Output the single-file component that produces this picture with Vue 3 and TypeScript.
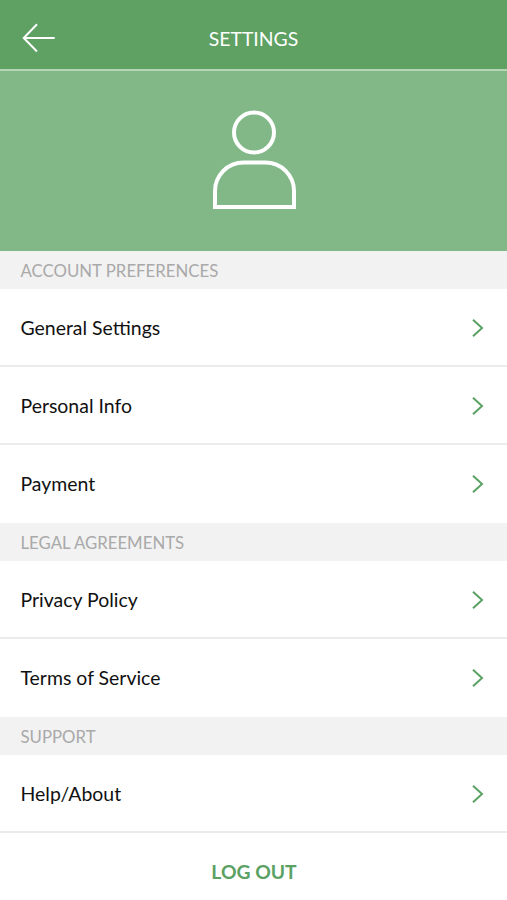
<script setup lang="ts">
interface Section {
  title: string
  items: string[]
}

const sections: Section[] = [
  { title: 'ACCOUNT PREFERENCES', items: ['General Settings', 'Personal Info', 'Payment'] },
  { title: 'LEGAL AGREEMENTS', items: ['Privacy Policy', 'Terms of Service'] },
  { title: 'SUPPORT', items: ['Help/About'] },
]
</script>

<template>
  <main class="screen">
    <header class="bar">
      <button class="back" aria-label="Back">
        <svg width="34" height="30" viewBox="0 0 34 30" fill="none" stroke="#fff" stroke-width="2">
          <path d="M15 1.200 1.700 15l13.300 13.500M1.700 15h31" />
        </svg>
      </button>
      <h1 class="title">SETTINGS</h1>
    </header>
    <div class="profile">
      <svg width="84" height="98" viewBox="0 0 84 98" fill="none" stroke="#fff" stroke-width="4">
        <circle cx="42" cy="21.500" r="20" />
        <path d="M3 96V80A28.500 28.500 0 0 1 31.500 51.500H53.500A28.500 28.500 0 0 1 82 80V96Z" />
      </svg>
    </div>
    <section v-for="section in sections" :key="section.title" class="section">
      <h2 class="heading">{{ section.title }}</h2>
      <ul class="list">
        <li v-for="item in section.items" :key="item" class="row">
          <span class="label">{{ item }}</span>
          <svg width="12" height="20" viewBox="0 0 12 20" fill="none" stroke="#5ba163" stroke-width="2">
            <path d="m1 1.700 9 8.300-9 8.300" />
          </svg>
        </li>
      </ul>
    </section>
    <button class="logout">LOG OUT</button>
  </main>
</template>

<style>
body {
  background: #fff;
}
</style>

<style scoped>
.screen {
  display: flex;
  flex-direction: column;
  height: 900px;
  overflow: hidden;
  font-family: Lato, sans-serif;
  color: #111;
}
.bar {
  box-sizing: border-box;
  display: grid;
  grid-template-columns: 78px 1fr 78px;
  align-items: center;
  height: 71px;
  padding-top: 7px;
  background: #5ea163;
  border-bottom: 2px solid #b4d6b7;
}
.back {
  display: flex;
  padding: 0 0 0 22px;
  border: 0;
  background: none;
}
.title {
  margin: 0;
  padding-top: 2px;
  text-align: center;
  font-size: 19.4px;
  font-weight: 400;
  line-height: 24px;
  color: #fff;
}
.profile {
  box-sizing: border-box;
  display: flex;
  justify-content: center;
  height: 180px;
  padding: 40px 0 0 1px;
  background: #82b888;
}
.profile svg {
  overflow: visible;
}
.heading {
  box-sizing: border-box;
  height: 38px;
  margin: 0;
  padding-left: 20.5px;
  background: #f2f2f2;
  font-size: 16.8px;
  font-weight: 400;
  line-height: 39px;
  color: #a9a9a9;
}
.list {
  margin: 0;
  padding: 0;
  list-style: none;
}
.row {
  display: flex;
  align-items: center;
  justify-content: space-between;
  height: 78px;
  padding: 0 23px 0 20.5px;
  font-size: 19.45px;
}
.label {
  padding-bottom: 1px;
  line-height: 24px;
}
.row:not(:last-child),
.section:last-of-type .row {
  box-shadow: inset 0 -2px #ebebeb;
}
.logout {
  height: 67px;
  padding: 11px 0 0 1px;
  border: 0;
  background: #fff;
  font: 700 19.3px/24px Lato, sans-serif;
  color: #5ba163;
}
</style>
